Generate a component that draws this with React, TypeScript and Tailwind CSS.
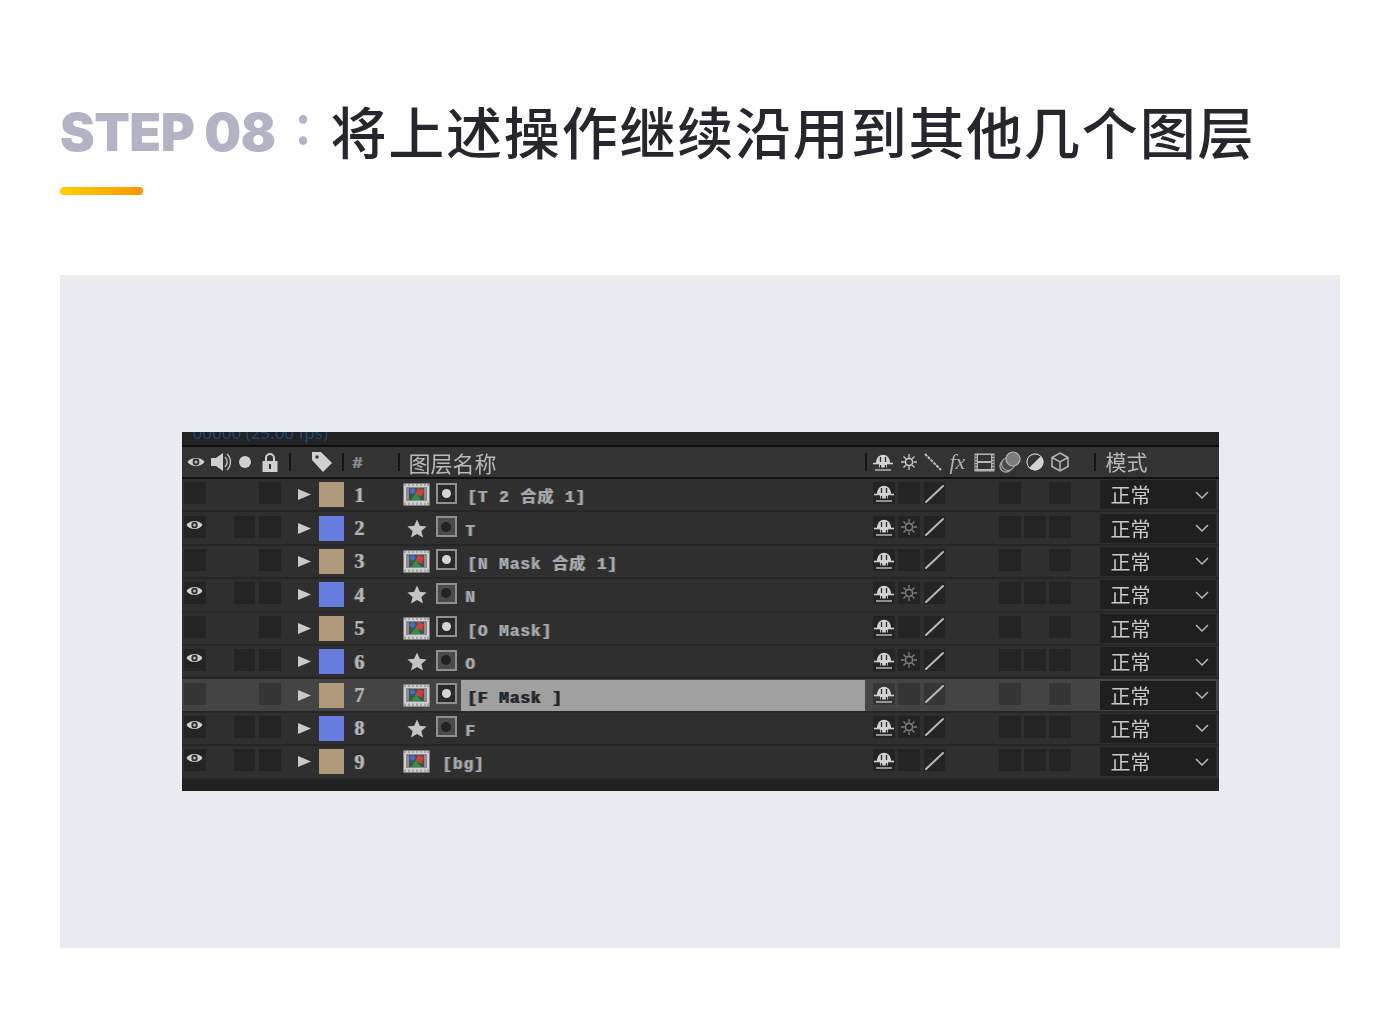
import React from 'react';

const layers = [
  { id: 1, kind: 'comp', name: '[T 2 合成 1]' },
  { id: 2, kind: 'star', name: 'T' },
  { id: 3, kind: 'comp', name: '[N Mask 合成 1]' },
  { id: 4, kind: 'star', name: 'N' },
  { id: 5, kind: 'comp', name: '[O Mask]' },
  { id: 6, kind: 'star', name: 'O' },
  { id: 7, kind: 'comp', name: '[F Mask ]', selected: true },
  { id: 8, kind: 'star', name: 'F' },
  { id: 9, kind: 'bg', name: '[bg]' },
];

const fringe = '[text-shadow:-1px_0_0_#3d6ea6,1px_0_0_#8d5c2e]';

function Eye({ className = 'w-[18px] h-[12px]' }: { className?: string }) {
  return (
    <svg viewBox="0 0 18 12" className={`shrink-0 ${className}`}>
      <path d="M0.5 6 C4 0.5 14 0.5 17.5 6 C14 11.5 4 11.5 0.5 6Z" fill="#d0d0d0" />
      <circle cx="9" cy="6" r="3.4" fill="#2c2c2c" />
      <circle cx="9" cy="6" r="1.6" fill="#b5b5b5" />
    </svg>
  );
}

function Shy() {
  return (
    <svg viewBox="0 0 22 20" className="w-[22px] h-[20px] shrink-0">
      <path d="M4 11 C4 0 18 0 18 11Z" fill="#d2d2d2" />
      <path d="M1 11.5 H21" stroke="#d2d2d2" strokeWidth="1.6" />
      <path d="M7 11 H15 V15.5 H7Z" fill="#d2d2d2" />
      <path d="M8.5 5 V10 M13.5 5 V10 M8.5 13 V16 M13.5 13 V16" stroke="#2a2a2a" strokeWidth="1.3" />
      <path d="M3 18 H19" stroke="#c0c0c0" strokeWidth="1.4" />
    </svg>
  );
}

function Sun({ dim }: { dim?: boolean }) {
  const c = dim ? '#7d7d7d' : '#c8c8c8';
  return (
    <svg viewBox="0 0 18 18" className="w-[18px] h-[18px] shrink-0">
      <circle cx="9" cy="9" r="3.6" fill="none" stroke={c} strokeWidth="1.6" />
      <path d="M9 1 V4.5 M9 13.5 V17 M1 9 H4.5 M13.5 9 H17 M3.5 3.5 L6 6 M12 12 L14.5 14.5 M14.5 3.5 L12 6 M6 12 L3.5 14.5" stroke={c} strokeWidth="1.3" />
    </svg>
  );
}

function Slash() {
  return (
    <svg viewBox="0 0 21 21" className="w-[21px] h-[21px]">
      <path d="M2 19 L19 3" stroke="#b8b8b8" strokeWidth="2" strokeLinecap="round" />
    </svg>
  );
}

function CompIcon() {
  return (
    <svg viewBox="0 0 27 23" className="w-[27px] h-[23px]">
      <rect x="0.5" y="0.5" width="26" height="22" fill="#cfcfcf" />
      <rect x="3" y="4" width="21" height="14" fill="#8a8a8a" />
      <rect x="6" y="5" width="15" height="12" fill="#4d4d4d" />
      <path d="M2 1 V3 M6 1 V3 M10 1 V3 M14 1 V3 M18 1 V3 M22 1 V3 M25 1 V3 M2 19.5 V22 M6 19.5 V22 M10 19.5 V22 M14 19.5 V22 M18 19.5 V22 M22 19.5 V22 M25 19.5 V22" stroke="#8a8a8a" strokeWidth="1.2" />
      <circle cx="9.5" cy="8" r="2.8" fill="#2f74d0" />
      <rect x="13.5" y="6" width="6.5" height="6.5" fill="#d93a32" transform="rotate(20 16.7 9.2)" />
      <path d="M13 10 L18 17 H8Z" fill="#1f9a3f" />
    </svg>
  );
}

function Star() {
  return (
    <svg viewBox="0 0 20 19" className="w-[20px] h-[19px]">
      <path d="M10 0.5 L12.8 6.8 L19.6 7.4 L14.4 11.9 L16 18.6 L10 15 L4 18.6 L5.6 11.9 L0.4 7.4 L7.2 6.8Z" fill="#c4c4c4" />
    </svg>
  );
}

function MaskBox({ filled }: { filled: boolean }) {
  return (
    <div className={`w-[21px] h-[21px] mb-[3px] border-2 border-[#8f8f8f] flex items-center justify-center ${filled ? 'bg-[#2a2a2a]' : 'bg-[#4a4a4a]'}`}>
      <div className={`rounded-full ${filled ? 'w-[9px] h-[9px] bg-[#d5d5d5]' : 'w-[10px] h-[10px] bg-[#232323]'}`} />
    </div>
  );
}

function Box({ dark, children, className = 'w-[22px]' }: { dark?: boolean; children?: React.ReactNode; className?: string }) {
  return (
    <div className={`h-[22px] mb-[3px] shrink-0 flex items-center justify-center ${className} ${dark ? 'bg-[#353535]' : 'bg-[#242424]'}`}>
      {children}
    </div>
  );
}

function Gap({ w }: { w: string }) {
  return <div className={`shrink-0 ${w}`} />;
}

function Sep() {
  return <div className="w-[2px] h-[18px] bg-[#151515] shrink-0" />;
}

function Row({ layer }: { layer: (typeof layers)[number] }) {
  const sel = !!layer.selected;
  const isStar = layer.kind === 'star';
  const isComp = layer.kind === 'comp';
  const isBg = layer.kind === 'bg';
  const visible = !isComp;
  return (
    <div className={`h-[33.4px] flex items-center border-b-2 border-[#262626] shrink-0 ${sel ? 'bg-[#444444]' : 'bg-[#2f2f2f]'}`}>
      <Gap w="w-[2px]" />
      <Box dark={sel}>{visible && <Eye className="w-[17px] h-[12px] mb-[4px]" />}</Box>
      <Gap w="w-[28px]" />
      {visible ? <Box className="w-[21px]" /> : <Gap w="w-[21px]" />}
      <Gap w="w-[4px]" />
      <Box dark={sel} />
      <Gap w="w-[17px]" />
      <svg viewBox="0 0 13 11" className="w-[13px] h-[11px] shrink-0">
        <path d="M0 0 L13 5.5 L0 11Z" fill="#c9c9c9" />
      </svg>
      <Gap w="w-[8px]" />
      <div className={`w-[25px] h-[25px] shrink-0 ${isStar ? 'bg-[#677ee0]' : 'bg-[#ae9a7a]'}`} />
      <div className={`w-[59px] pl-[11px] shrink-0 text-[20px] font-bold text-[#b4b4b4] ${fringe} font-['Liberation_Serif',serif]`}>{layer.id}</div>
      <div className="w-[33px] shrink-0 flex items-center">
        {isStar ? <div className="pl-[4px] flex"><Star /></div> : <CompIcon />}
      </div>
      <div className="w-[25px] shrink-0 flex">
        {!isBg && <MaskBox filled={isComp} />}
      </div>
      <div className={`w-[404px] shrink-0 h-[31px] flex items-center whitespace-pre font-bold text-[16px] tracking-[1px] pt-[7px] font-['Liberation_Mono','Noto_Sans_CJK_SC',monospace] ${sel ? 'bg-[#a0a0a0] text-[#23262b] [text-shadow:-1px_0_0_#3d5f86,1px_0_0_#6d4a2a]' : `text-[#a9a9a9] ${fringe}`} ${isStar ? 'pl-[5px]' : isBg ? '-ml-[18px]' : 'pl-[7px]'}`}>
        {layer.name}
      </div>
      {isBg && <Gap w="w-[18px]" />}
      <Gap w="w-[8px]" />
      <Box dark={sel}><Shy /></Box>
      <Gap w="w-[3px]" />
      <Box dark={sel}>{isStar && <Sun dim />}</Box>
      <Gap w="w-[4px]" />
      <Box dark={sel} className="w-[21px]"><Slash /></Box>
      <Gap w="w-[54px]" />
      <Box dark={sel} />
      <Gap w="w-[3px]" />
      {visible ? <Box /> : <Gap w="w-[22px]" />}
      <Gap w="w-[3px]" />
      <Box dark={sel} />
      <Gap w="w-[29px]" />
      <div className="w-[116px] h-[29px] shrink-0 bg-[#1f1f1f] flex items-center justify-between pl-[11px] pr-[7px] text-[20px] text-[#c9c9c9] font-['Noto_Sans_CJK_SC',sans-serif]">
        <span className="leading-none pt-[1px]">正常</span>
        <svg viewBox="0 0 14 8" className="w-[14px] h-[8px]">
          <path d="M1 1 L7 7 L13 1" fill="none" stroke="#b5b5b5" strokeWidth="1.5" />
        </svg>
      </div>
    </div>
  );
}

function HeaderBar() {
  return (
    <div className="h-[32px] shrink-0 bg-[#333333] flex items-center text-[#b9b9b9] text-[22px] font-['Noto_Sans_CJK_SC',sans-serif] border-b-2 border-[#111111]">
      <Gap w="w-[5px]" />
      <Eye />
      <Gap w="w-[5px]" />
      <svg viewBox="0 0 22 22" className="w-[22px] h-[22px] shrink-0">
        <path d="M1 7 H6 L13 2 V20 L6 15 H1Z" fill="#cfcfcf" />
        <path d="M15 6 A7 7 0 0 1 15 16 M17 3 A11 11 0 0 1 17 19" fill="none" stroke="#bdbdbd" strokeWidth="1.4" />
      </svg>
      <Gap w="w-[7px]" />
      <div className="w-[12px] h-[12px] rounded-full bg-[#cfcfcf] shrink-0" />
      <Gap w="w-[11px]" />
      <svg viewBox="0 0 16 19" className="w-[16px] h-[19px] shrink-0">
        <path d="M4 8 V5 A4 4 0 0 1 12 5 V8" fill="none" stroke="#cfcfcf" strokeWidth="2" />
        <rect x="0.5" y="8" width="15" height="11" fill="#cfcfcf" />
        <rect x="7" y="11" width="2" height="5" fill="#333333" />
      </svg>
      <Gap w="w-[11px]" />
      <Sep />
      <Gap w="w-[20px]" />
      <svg viewBox="0 0 22 22" className="w-[22px] h-[22px] shrink-0">
        <path d="M1 1 H10 L21 12 L12 21 L1 9Z" fill="#d0d0d0" />
        <circle cx="6" cy="6" r="1.7" fill="#333333" />
      </svg>
      <Gap w="w-[9px]" />
      <Sep />
      <Gap w="w-[9px]" />
      <span className={`w-[45px] pt-[3px] shrink-0 text-[17px] font-bold text-[#8c8c8c] ${fringe} font-['Liberation_Mono',monospace]`}>#</span>
      <Sep />
      <Gap w="w-[9px]" />
      <span className="w-[456px] shrink-0">图层名称</span>
      <Sep />
      <Gap w="w-[5px]" />
      <Shy />
      <Gap w="w-[6px]" />
      <Sun />
      <Gap w="w-[6px]" />
      <svg viewBox="0 0 18 18" className="w-[18px] h-[18px] shrink-0">
        <path d="M1 1 L17 17" stroke="#c2c2c2" strokeWidth="2" strokeDasharray="3 1" />
      </svg>
      <Gap w="w-[8px]" />
      <span className="w-[20px] shrink-0 text-[22px] italic font-['Liberation_Serif',serif] text-[#b0b0b0] leading-none">fx</span>
      <Gap w="w-[4px]" />
      <svg viewBox="0 0 21 19" className="w-[21px] h-[19px] shrink-0">
        <rect x="0.5" y="0.5" width="20" height="18" fill="#b5b5b5" />
        <rect x="4" y="2" width="13" height="6" fill="#333333" />
        <rect x="4" y="10" width="13" height="6" fill="#333333" />
        <path d="M2 2 V17 M19 2 V17" stroke="#555555" strokeWidth="1.5" strokeDasharray="2 1" />
      </svg>
      <Gap w="w-[4px]" />
      <svg viewBox="0 0 22 22" className="w-[22px] h-[22px] shrink-0">
        <circle cx="7" cy="15" r="6" fill="none" stroke="#a5a5a5" strokeWidth="1.4" />
        <circle cx="9" cy="13" r="6.5" fill="#4a4a4a" stroke="#a5a5a5" strokeWidth="1.2" />
        <circle cx="14" cy="8" r="7" fill="#7c7c7c" stroke="#b5b5b5" strokeWidth="1.2" />
      </svg>
      <Gap w="w-[5px]" />
      <svg viewBox="0 0 18 18" className="w-[18px] h-[18px] shrink-0">
        <circle cx="9" cy="9" r="8.5" fill="#d2d2d2" />
        <path d="M15 3 A8.5 8.5 0 0 0 3 15Z" fill="#333333" />
        <circle cx="9" cy="9" r="8" fill="none" stroke="#d2d2d2" />
      </svg>
      <Gap w="w-[6px]" />
      <svg viewBox="0 0 20 20" className="w-[20px] h-[20px] shrink-0">
        <path d="M10 1 L18 5.5 V14.5 L10 19 L2 14.5 V5.5Z M2 5.5 L10 10 L18 5.5 M10 10 V19" fill="none" stroke="#b5b5b5" strokeWidth="1.5" />
      </svg>
      <Gap w="w-[24px]" />
      <Sep />
      <Gap w="w-[10px]" />
      <span className="text-[21px]">模式</span>
    </div>
  );
}

export default function App() {
  return (
    <div className="w-[1400px] h-[1016px] bg-white px-[60px] overflow-hidden">
      <div className="pt-[98px] h-[187px] flex items-start whitespace-pre">
        <span className="text-[52px] leading-[70px] font-black tracking-[-0.5px] text-[#b3b3c6] font-['Inter',sans-serif]">STEP 08</span>
        <span className="w-[55px] text-center text-[54px] leading-[46px] font-medium text-[#b3b3c6] font-['Noto_Sans_CJK_SC',sans-serif]">:</span>
        <span className="text-[56px] leading-[64px] font-medium tracking-[1.8px] text-[#26272e] font-['Noto_Sans_CJK_SC',sans-serif]">将上述操作继续沿用到其他几个图层</span>
      </div>
      <div className="w-[83px] h-[8px] rounded-full bg-gradient-to-r from-[#ffd000] to-[#ff9500]" />
      <div className="mt-[80px] w-[1280px] h-[673px] bg-[#ebecf1] flex items-center justify-center">
        <div className="w-[1037px] h-[359px] bg-[#222222] flex flex-col blur-[0.5px] overflow-hidden">
          <div className="h-[13px] shrink-0 overflow-hidden pl-[11px] text-[#1d4a7d] text-[17px] leading-[13px] font-['Noto_Sans',sans-serif]">
            <span className="block -mt-[6px]">00000 (25.00 fps)</span>
          </div>
          <div className="h-[2px] shrink-0 bg-[#0f0f0f]" />
          <HeaderBar />
          {layers.map((layer) => (
            <Row key={layer.id} layer={layer} />
          ))}
        </div>
      </div>
    </div>
  );
}
